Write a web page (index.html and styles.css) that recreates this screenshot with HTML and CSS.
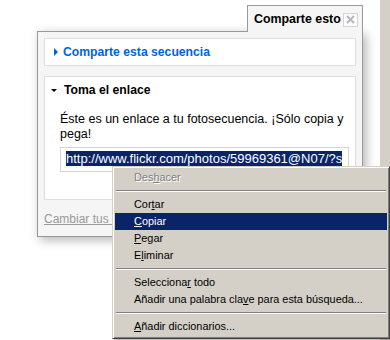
FILE: index.html
```html
<!DOCTYPE html>
<html lang="es">
<head>
<meta charset="utf-8">
<title>Comparte esto</title>
<link rel="stylesheet" href="styles.css">
</head>
<body>
<div class="screen">
  <div class="page">
    <div class="popup">
      <div class="tabrow">
        <div class="tab">
          <span class="tab-title">Comparte esto</span>
          <span class="close"><svg width="13" height="12" viewBox="0 0 13 12"><path d="M3 2 L10 9 M10 2 L3 9" stroke="#b8b8b8" stroke-width="2"/></svg></span>
        </div>
      </div>
      <div class="panel">
        <div class="section">
          <div class="sec-head">
            <span class="tri-right"></span>
            <span class="sec-title blue">Comparte esta secuencia</span>
          </div>
        </div>
        <div class="section open">
          <div class="sec-head">
            <span class="tri-down"></span>
            <span class="sec-title">Toma el enlace</span>
          </div>
          <p class="desc">Éste es un enlace a tu fotosecuencia. ¡Sólo copia y pega!</p>
          <div class="urlbox"><span class="sel">http://www.flickr.com/photos/59969361@N07/?s</span></div>
        </div>
        <a class="change" href="#">Cambiar tus preferencias de uso compartido</a>
      </div>
    </div>

    <div class="menu">
      <div class="item disabled">Des<u>h</u>acer</div>
      <div class="sep"></div>
      <div class="item">Cor<u>t</u>ar</div>
      <div class="item active"><u>C</u>opiar</div>
      <div class="item"><u>P</u>egar</div>
      <div class="item">E<u>l</u>iminar</div>
      <div class="sep"></div>
      <div class="item">Selecciona<u>r</u> todo</div>
      <div class="item">Añadir una palabra cla<u>v</u>e para esta búsqueda...</div>
      <div class="sep"></div>
      <div class="item"><u>A</u>ñadir diccionarios...</div>
    </div>
  </div>
  <div class="strip"></div>
</div>
</body>
</html>
```
FILE: styles.css
```css
html, body {
  margin: 0;
  padding: 0;
  background: #ffffff;
}

.screen {
  display: flex;
  width: 390px;
  height: 340px;
  overflow: hidden;
}

.page {
  position: relative;
  flex: 0 0 378px;
  height: 340px;
  background: #ffffff;
}

.strip {
  flex: 0 0 10px;
  border-left: 2px solid #ffffff;
  background: #d4d0c8;
}

/* popup */
.popup {
  position: absolute;
  left: 37px;
  top: 5px;
  width: 326px;
  font-family: "Liberation Sans", Arial, sans-serif;
}

.tabrow {
  display: flex;
  justify-content: flex-end;
  position: relative;
  z-index: 2;
}

.tab {
  box-sizing: border-box;
  width: 116px;
  height: 27px;
  display: flex;
  align-items: center;
  justify-content: space-between;
  padding: 0 4px 0 6px;
  background: #f5f5f5;
  border: 1px solid #999999;
  border-bottom: none;
  margin-bottom: -1px;
}

.tab-title {
  font-weight: bold;
  font-size: 12.4px;
  color: #000;
  white-space: nowrap;
}

.close {
  display: flex;
  align-items: center;
  justify-content: center;
  box-sizing: border-box;
  width: 15px;
  height: 14px;
  border: 1px solid #d4d4d4;
  background: #fbfbfb;
  margin-top: 1px;
}

.close svg {
  display: block;
}

.panel {
  box-sizing: border-box;
  height: 206px;
  background: #f5f5f5;
  border: 1px solid #999999;
  padding: 6px;
  display: flex;
  flex-direction: column;
  gap: 10px;
  box-shadow: 3px 3px 10px rgba(0, 0, 0, 0.3);
}

.section {
  background: #ffffff;
  border: 1px solid #dddddd;
}

.sec-head {
  display: flex;
  align-items: center;
  height: 26px;
  padding-left: 8px;
  gap: 5px;
}

.sec-title {
  font-weight: bold;
  font-size: 12.2px;
  color: #000000;
  white-space: nowrap;
}

.sec-title.blue {
  color: #0063dc;
}

.tri-right {
  width: 0;
  height: 0;
  border-top: 4px solid transparent;
  border-bottom: 4px solid transparent;
  border-left: 4px solid #0063dc;
  margin-left: 1px;
}

.tri-down {
  width: 0;
  height: 0;
  border-left: 3px solid transparent;
  border-right: 3px solid transparent;
  border-top: 3px solid #000;
  margin-left: -2px;
  margin-right: 2px;
}

.open {
  height: 124px;
  box-sizing: border-box;
}

.desc {
  margin: 9px 0 0 15px;
  width: 312px;
  font-size: 12.5px;
  line-height: 15px;
  color: #000;
}

.urlbox {
  box-sizing: border-box;
  margin: 5px 0 0 15px;
  width: 289px;
  height: 25px;
  border: 1px solid #d4d4d4;
  background: #fff;
  padding: 3px 0 0 5px;
  overflow: hidden;
  white-space: nowrap;
  font-size: 13px;
  line-height: 16px;
}

.sel {
  background: #0a246a;
  color: #ffffff;
}

.change {
  font-size: 12px;
  color: #999999;
  text-decoration: underline;
  margin-top: 2px;
  white-space: nowrap;
}

/* context menu */
.menu {
  position: absolute;
  left: 112px;
  top: 166px;
  width: 278px;
  box-sizing: border-box;
  background: #d4d0c8;
  border-top: 1px solid #d4d0c8;
  border-left: 1px solid #d4d0c8;
  border-right: 1px solid #404040;
  border-bottom: 1px solid #404040;
  box-shadow: inset 1px 1px 0 #ffffff, inset -1px -1px 0 #808080, 2px 2px 2px rgba(0, 0, 0, 0.25);
  padding: 2px 2px 3px 2px;
  font-family: "Liberation Sans", Tahoma, sans-serif;
  font-size: 10.9px;
  z-index: 5;
}

.item {
  height: 17px;
  line-height: 17px;
  padding-left: 19px;
  color: #000;
  white-space: nowrap;
}

.item.disabled {
  color: #808080;
  text-shadow: 1px 1px 0 #ffffff;
}

.item.active {
  background: #0a246a;
  color: #ffffff;
}

.sep {
  height: 0;
  border-top: 1px solid #808080;
  border-bottom: 1px solid #ffffff;
  margin: 4px 1px 4px 1px;
}
```
